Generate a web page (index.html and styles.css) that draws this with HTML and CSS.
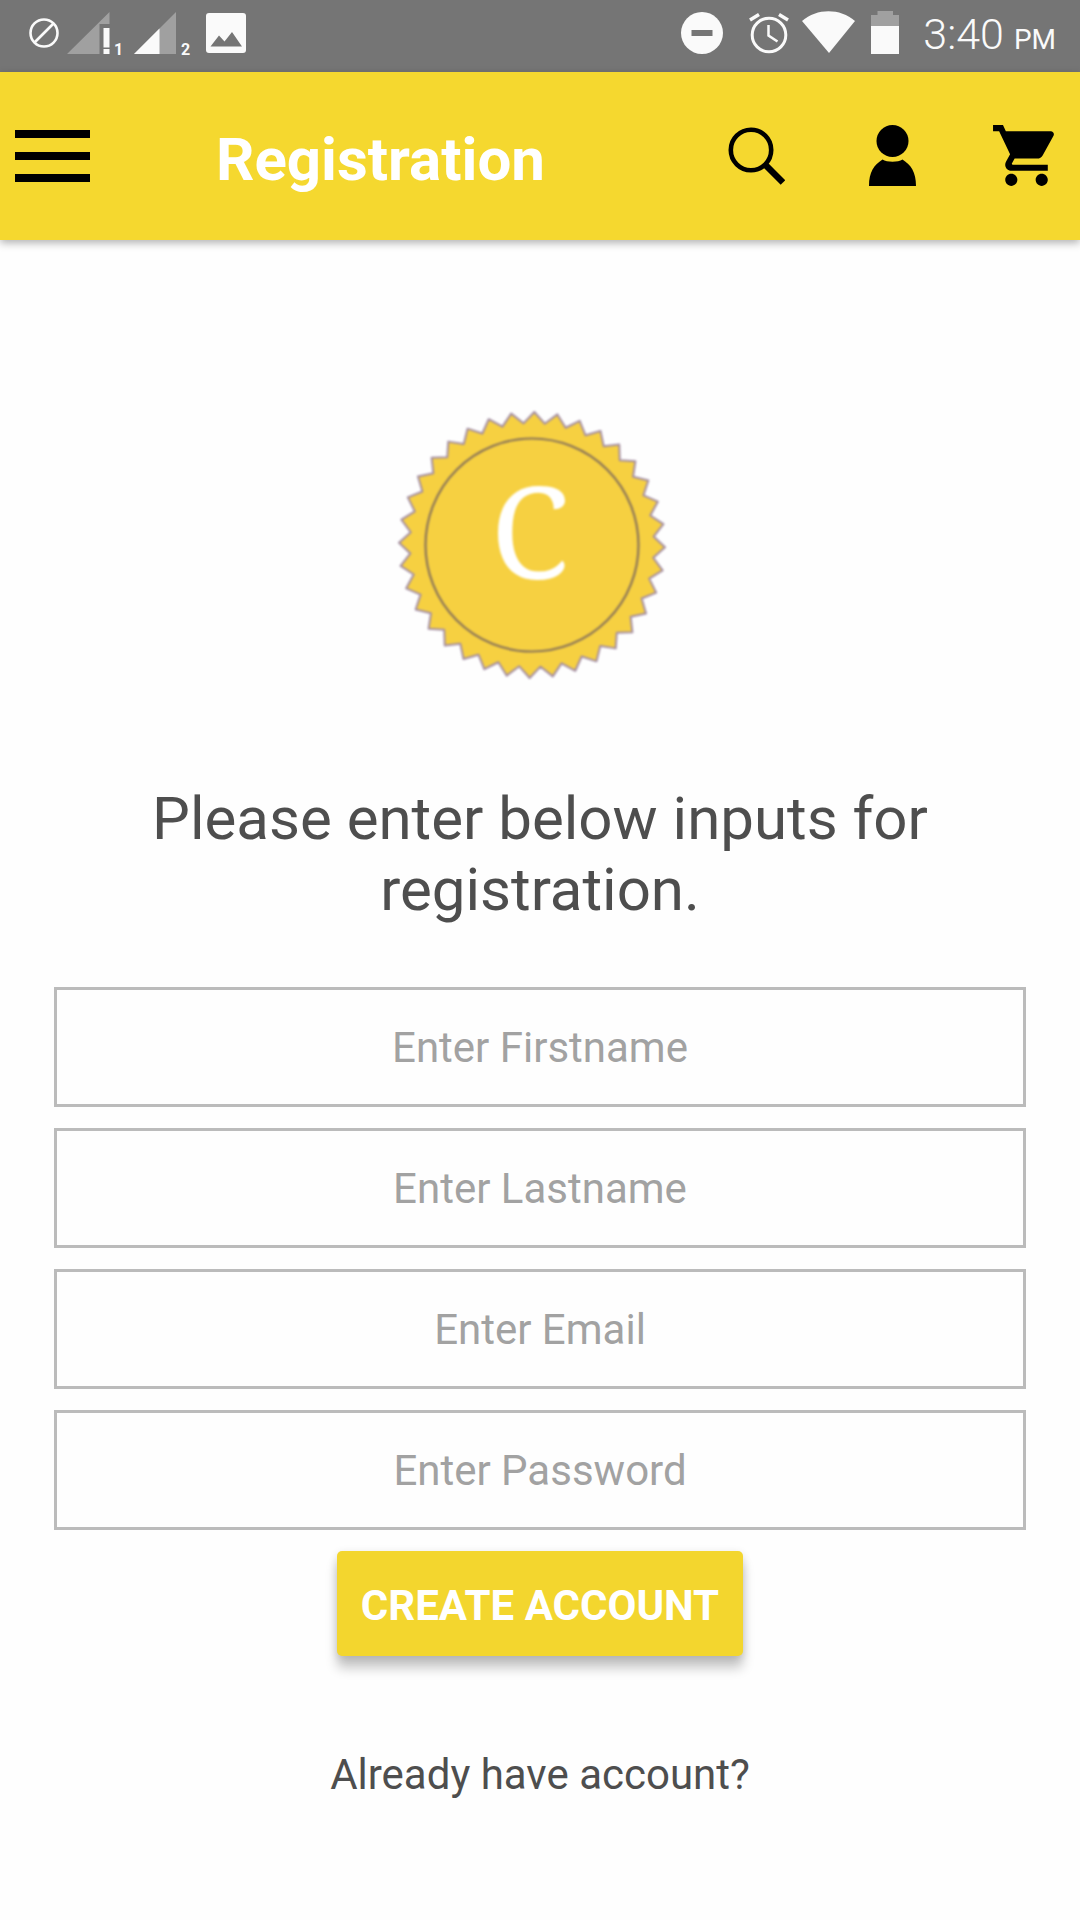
FILE: index.html
```html
<!DOCTYPE html>
<html lang="en">
<head>
<meta charset="utf-8">
<title>Registration</title>
<link rel="stylesheet" href="styles.css">
</head>
<body>
<div class="status-bar">
  <div class="status-left">
    <svg class="ic-block" width="30" height="30" viewBox="0 0 30 30"><circle cx="15" cy="15" r="13.500" fill="none" stroke="#fafafa" stroke-width="2.600"/><path d="M5.500 24.500 24.500 5.500" stroke="#fafafa" stroke-width="2.600"/></svg>
    <div class="sim sim-one">
      <svg width="43" height="42" viewBox="0 0 43 42"><path d="M0 42 42.500 0V12H32.500V42Z" fill="#a0a0a0"/><path d="M36.500 16h6v19.500h-6zM36.500 37h6v5h-6z" fill="#fafafa"/></svg>
      <span class="sim-num">1</span>
    </div>
    <div class="sim sim-two">
      <svg width="42" height="42" viewBox="0 0 42 42"><path d="M0 42 42 0V42Z" fill="#a0a0a0"/><path d="M0 42 25.500 16.500V42Z" fill="#fafafa"/></svg>
      <span class="sim-num">2</span>
    </div>
    <svg class="ic-image" width="40" height="40" viewBox="0 0 40 40"><rect width="40" height="40" rx="3" fill="#fafafa"/><path d="M4.500 33.500 13 22.500l5.500 6 7.500-9.500 10 14.500Z" fill="#757575"/></svg>
  </div>
  <div class="status-right">
    <svg class="ic-dnd" width="42" height="42" viewBox="0 0 42 42"><circle cx="21" cy="21" r="21" fill="#fafafa"/><rect x="10.500" y="18" width="21" height="6" fill="#757575"/></svg>
    <svg class="ic-alarm" width="42" height="44" viewBox="0 0 42 44"><circle cx="21" cy="23" r="16.800" fill="none" stroke="#fafafa" stroke-width="3"/><path d="M20.500 13v10.500l9 6" fill="none" stroke="#fafafa" stroke-width="2.500"/><path d="M2 8 11 2.500M40 8 31 2.500" stroke="#fafafa" stroke-width="3.500"/></svg>
    <svg class="ic-wifi" width="53" height="43" viewBox="0 0 53 43"><path d="M27 42 0 10C15-3 38-3 53 10Z" fill="#fafafa"/></svg>
    <svg class="ic-battery" width="28" height="43" viewBox="0 0 28 43"><path d="M6.500 0H22V4H28V15H0V4H6.500Z" fill="#a0a0a0"/><rect y="15" width="28" height="28" fill="#fafafa"/></svg>
    <div class="clock"><span class="clock-time">3:40</span><span class="clock-ampm">PM</span></div>
  </div>
</div>

<header class="app-bar">
  <div class="menu"><span></span><span></span><span></span></div>
  <h1 class="title">Registration</h1>
  <div class="actions">
    <svg class="ic-search" width="58" height="60" viewBox="0 0 58 60"><circle cx="24" cy="24" r="20.200" fill="none" stroke="#000" stroke-width="4.600"/><path d="M38 38.500 56 56.500" stroke="#000" stroke-width="6.500"/></svg>
    <svg class="ic-person" width="47" height="62" viewBox="0 0 47 62"><circle cx="23.500" cy="16" r="16" fill="#000"/><path d="M0 61C0 47 5 40 13.500 34.500 18 37.500 29 37.500 33.500 34.500 42 40 47 47 47 61Z" fill="#000"/></svg>
    <svg class="ic-cart" width="73" height="73" viewBox="0 0 24 24"><path d="M7 18c-1.100 0-1.990.9-1.990 2S5.900 22 7 22s2-.9 2-2-.9-2-2-2zM1 2v2h2l3.600 7.590-1.350 2.450c-.16.280-.25.610-.25.960 0 1.100.9 2 2 2h12v-2H7.420c-.14 0-.25-.11-.25-.25l.03-.12.9-1.630h7.450c.750 0 1.410-.41 1.750-1.030l3.580-6.490c.08-.14.120-.31.120-.48 0-.55-.45-1-1-1H5.210l-.94-2H1zm16 16c-1.100 0-1.990.9-1.990 2s.89 2 1.990 2 2-.9 2-2-.9-2-2-2z" fill="#000"/></svg>
  </div>
</header>

<main class="content">
  <svg class="badge" width="280" height="280" viewBox="-140 -140 280 280">
    <g transform="rotate(1)">
      <polygon class="badge-seal" points="0,-133 10.600,-121.500 23.100,-131 31.600,-117.800 45.500,-125 51.600,-110.600 66.500,-115.200 70,-99.900 85.500,-101.900 86.300,-86.300 101.900,-85.500 99.900,-70 115.200,-66.500 110.600,-51.600 125,-45.500 117.800,-31.600 131,-23.100 121.500,-10.600 133,0 121.500,10.600 131,23.100 117.800,31.600 125,45.500 110.600,51.600 115.200,66.500 99.900,70 101.900,85.500 86.300,86.300 85.500,101.900 70,99.900 66.500,115.200 51.600,110.600 45.500,125 31.600,117.800 23.100,131 10.600,121.500 0,133 -10.600,121.500 -23.100,131 -31.600,117.800 -45.500,125 -51.600,110.600 -66.500,115.200 -70,99.900 -85.500,101.900 -86.300,86.300 -101.900,85.500 -99.900,70 -115.200,66.500 -110.600,51.600 -125,45.500 -117.800,31.600 -131,23.100 -121.500,10.600 -133,0 -121.500,-10.600 -131,-23.100 -117.800,-31.600 -125,-45.500 -110.600,-51.600 -115.200,-66.500 -99.900,-70 -101.900,-85.500 -86.300,-86.300 -85.500,-101.900 -70,-99.900 -66.500,-115.200 -51.600,-110.600 -45.500,-125 -31.600,-117.800 -23.100,-131 -10.600,-121.500"/>
    </g>
    <circle class="badge-ring" cx="0" cy="0" r="106.500"/>
    <text class="badge-letter" x="-2" y="34" text-anchor="middle">C</text>
  </svg>

  <p class="intro">Please enter below inputs for registration.</p>

  <form class="form">
    <input class="field" type="text" placeholder="Enter Firstname">
    <input class="field" type="text" placeholder="Enter Lastname">
    <input class="field" type="email" placeholder="Enter Email">
    <input class="field" type="password" placeholder="Enter Password">
    <button class="submit" type="button">CREATE ACCOUNT</button>
  </form>

  <p class="login-link">Already have account?</p>
</main>
</body>
</html>
```

FILE: styles.css
```css
* { box-sizing: border-box; }

html, body {
  margin: 0;
  padding: 0;
  height: 1920px;
  overflow: hidden;
  background: #fefefe;
  font-family: Roboto, "Liberation Sans", sans-serif;
}

.status-bar {
  height: 72px;
  background: #757575;
  display: flex;
  justify-content: space-between;
}

.status-left, .status-right { display: flex; align-items: flex-start; }

.status-left { padding: 12px 0 0 29px; }

.ic-block { margin-top: 6px; }

.sim { position: relative; display: flex; align-items: flex-start; }
.sim-one { margin-left: 8px; width: 67px; }
.sim-two { width: 72px; }

.sim-num {
  position: absolute;
  top: 29px;
  font-size: 16px;
  line-height: 18px;
  font-weight: 700;
  color: #fafafa;
}
.sim-one .sim-num { left: 47px; }
.sim-two .sim-num { left: 47px; }

.ic-image { margin-top: 1px; }

.status-right { padding: 0 24px 0 0; }
.ic-dnd { margin: 12px 0 0 0; }
.ic-alarm { margin: 12px 0 0 25px; }
.ic-wifi { margin: 11px 0 0 12px; }
.ic-battery { margin: 11px 0 0 16px; }

.clock {
  margin: 11px 0 0 24px;
  color: #fafafa;
  white-space: nowrap;
  line-height: 46px;
}
.clock-time { font-size: 43px; font-weight: 300; }
.clock-ampm { font-size: 28px; margin-left: 10px; }

.app-bar {
  height: 168px;
  background: #f5d82f;
  display: flex;
  align-items: center;
  box-shadow: 0 3px 8px rgba(0, 0, 0, .3);
  position: relative;
}

.menu {
  margin-left: 15px;
  width: 75px;
  display: flex;
  flex-direction: column;
  gap: 14px;
}
.menu span { height: 8px; background: #000; }

.title {
  margin: 7px 0 0 126px;
  font-size: 60px;
  line-height: 68px;
  font-weight: 700;
  color: #fff;
  white-space: nowrap;
}

.actions {
  margin-left: auto;
  display: flex;
  align-items: flex-start;
  height: 74px;
}
.ic-search { margin: 7px 0 0 0; }
.ic-person { margin: 6px 0 0 84px; }
.ic-cart { margin: 0 17px 0 74px; }

.content {
  display: flex;
  flex-direction: column;
  align-items: center;
}

.badge {
  margin-top: 165px;
  margin-left: -16px;
  filter: blur(.8px);
}
.badge-seal { fill: #f6d041; stroke: #a48ea2; stroke-width: 2; stroke-linejoin: round; }
.badge-ring { fill: none; stroke: #8b7558; stroke-width: 2.200; }
.badge-letter { font-family: "Noto Serif", "DejaVu Serif", "Liberation Serif", serif; font-size: 128px; fill: #fff; }

.intro {
  margin: 98px 0 0;
  width: 860px;
  text-align: center;
  font-size: 60px;
  line-height: 71px;
  color: #4e4e4e;
}

.form {
  margin-top: 62px;
  width: 972px;
  display: flex;
  flex-direction: column;
  align-items: center;
  gap: 21px;
}

.field {
  display: block;
  width: 100%;
  height: 120px;
  border: 3px solid #bbb;
  border-radius: 0;
  background: transparent;
  outline: none;
  text-align: center;
  font-family: inherit;
  font-size: 42px;
  color: #333;
}
.field::placeholder { color: #a2a2a2; opacity: 1; }

.submit {
  width: 406px;
  height: 105px;
  padding: 3px 0 0;
  border: 0;
  border-radius: 5px;
  background: #f3d62e;
  color: #fff;
  font-family: inherit;
  font-size: 42px;
  font-weight: 700;
  box-shadow: 0 12px 12px rgba(0, 0, 0, .22), 0 2px 8px rgba(0, 0, 0, .12);
}

.login-link {
  margin: 94px 0 0;
  font-size: 42px;
  line-height: 50px;
  color: #4e4e4e;
}
```
